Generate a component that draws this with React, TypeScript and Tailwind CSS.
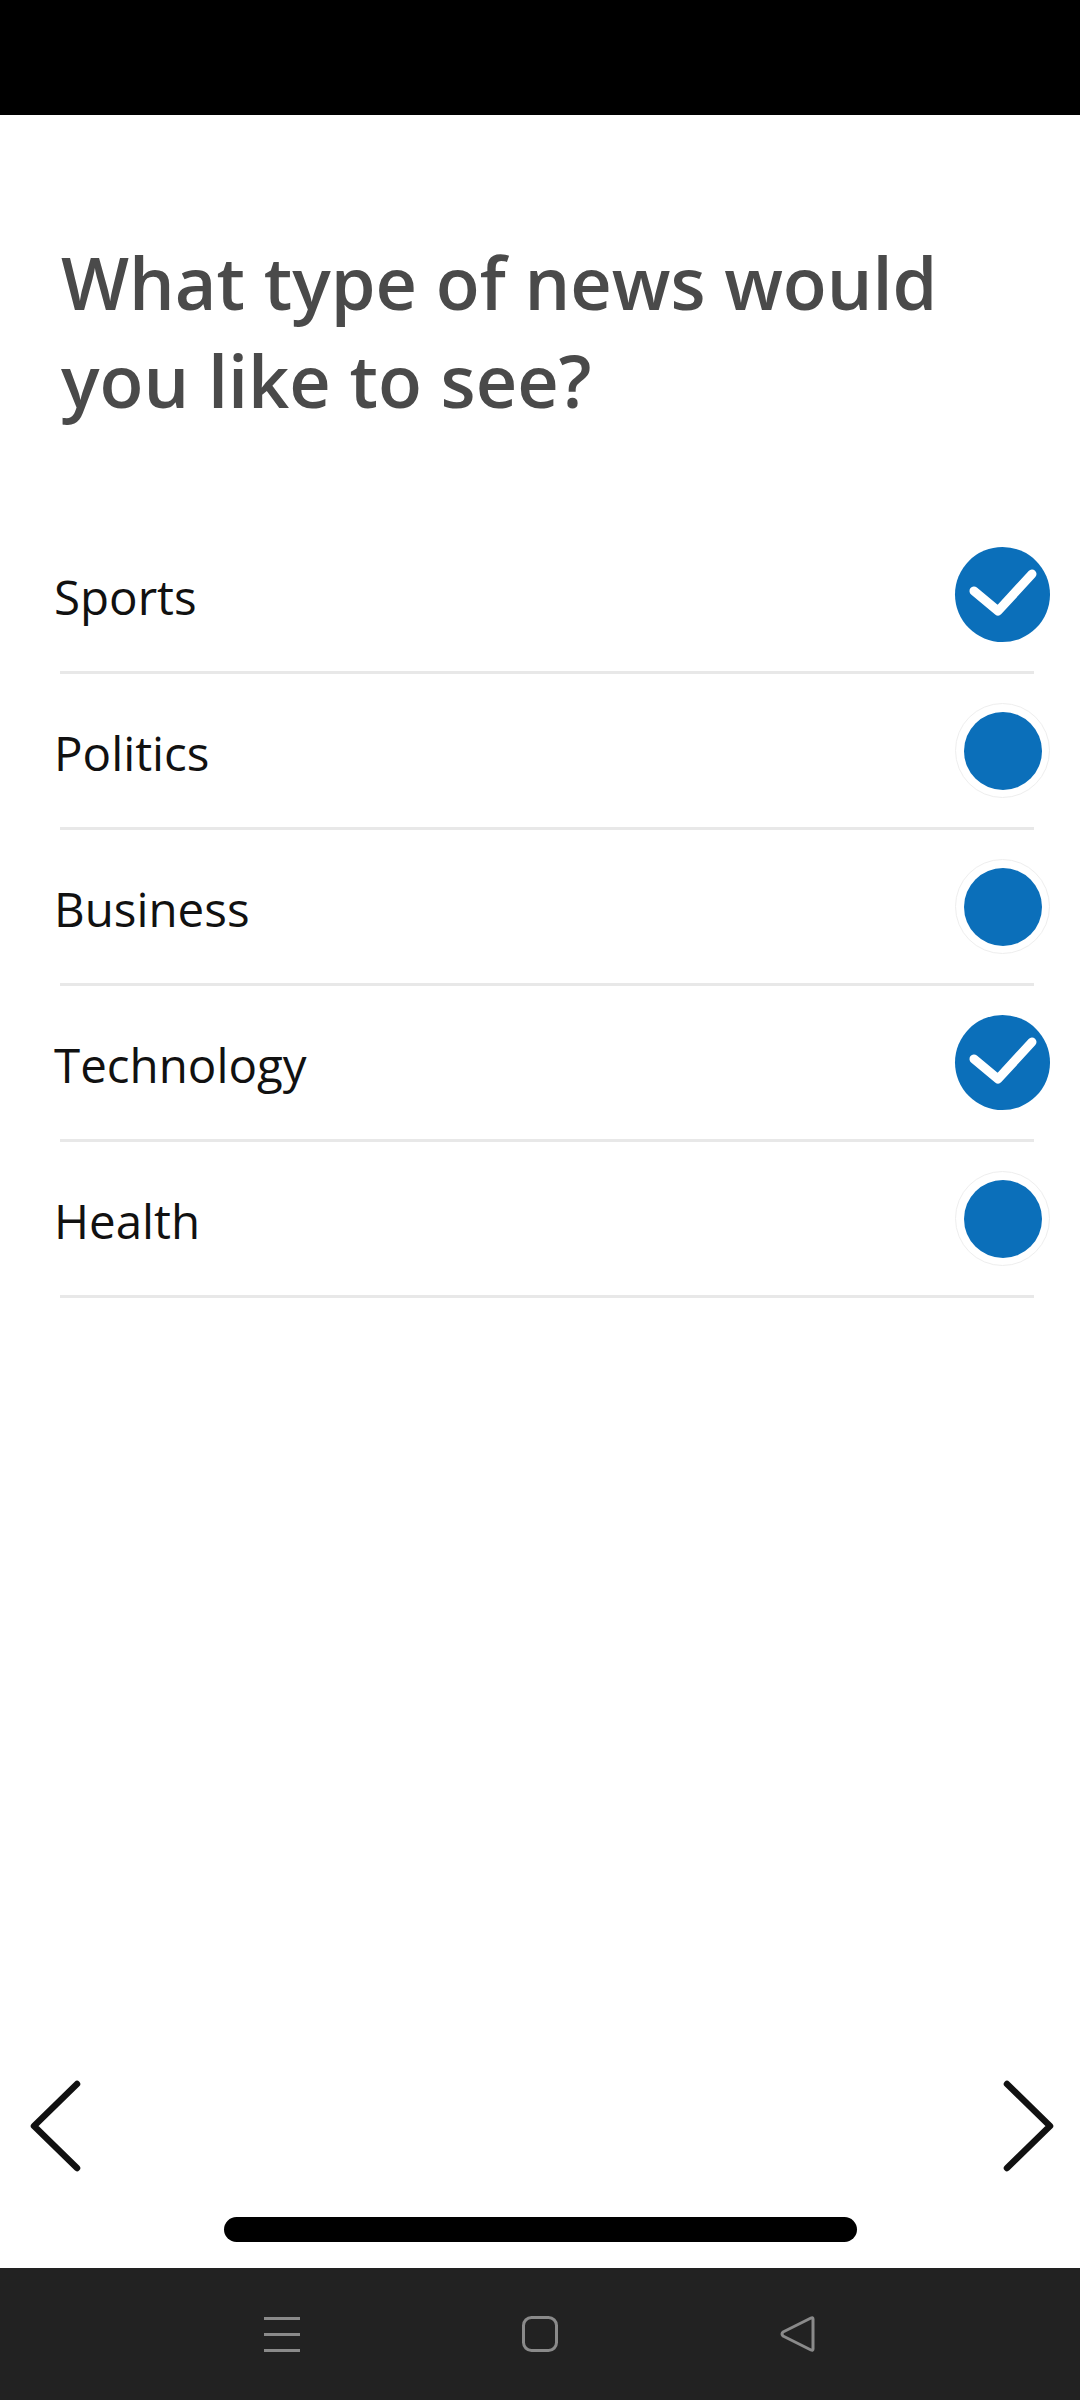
import React from "react";

const items = [
  { label: "Sports", checked: true },
  { label: "Politics", checked: false },
  { label: "Business", checked: false },
  { label: "Technology", checked: true },
  { label: "Health", checked: false },
];

function CheckCircle({ checked }: { checked: boolean }) {
  if (checked) {
    return (
      <div className="w-[95px] h-[95px] rounded-full bg-[#0b6fba] flex items-center justify-center">
        <svg width="95" height="95" viewBox="0 0 95 95">
          <polyline
            points="19,44 43,64 77,27"
            fill="none"
            stroke="#ffffff"
            strokeWidth="9"
            strokeLinecap="round"
            strokeLinejoin="round"
          />
        </svg>
      </div>
    );
  }
  return (
    <div className="w-[95px] h-[95px] rounded-full border border-[#eeeeee] flex items-center justify-center">
      <div className="w-[78px] h-[78px] rounded-full bg-[#0b6fba]" />
    </div>
  );
}

export default function App() {
  return (
    <div
      className="w-[1080px] h-[2400px] bg-white flex flex-col overflow-hidden"
      style={{ fontFamily: '"Open Sans", "Noto Sans", sans-serif' }}
    >
      <div className="h-[115px] bg-black shrink-0" />

      <h1 className="mt-[118px] pl-[61px] text-[72px] leading-[98px] font-semibold text-[#4a4a4a]">
        What type of news would
        <br />
        you like to see?
      </h1>

      <div className="mt-[89px] flex flex-col">
        {items.map((it) => (
          <div key={it.label} className="flex flex-col">
            <div className="h-[153px] flex items-center justify-between pl-[54px] pr-[30px]">
              <span className="text-[47.5px] leading-[64px] mt-[4px] text-[#111111]">{it.label}</span>
              <CheckCircle checked={it.checked} />
            </div>
            <div className="ml-[60px] w-[974px] h-[3px] bg-[#e8e8e8]" />
          </div>
        ))}
      </div>

      <div className="flex-1" />

      <div className="h-[92px] flex items-center justify-between pl-[28px] pr-[22px] mb-[45px]">
        <svg width="56" height="92" viewBox="0 0 56 92">
          <polyline
            points="49,4 6,46 49,88"
            fill="none"
            stroke="#111111"
            strokeWidth="6.5"
            strokeLinecap="round"
            strokeLinejoin="round"
          />
        </svg>
        <svg width="56" height="92" viewBox="0 0 56 92">
          <polyline
            points="5,4 48,46 5,88"
            fill="none"
            stroke="#111111"
            strokeWidth="6.5"
            strokeLinecap="round"
            strokeLinejoin="round"
          />
        </svg>
      </div>

      <div className="flex justify-center mb-[26px]">
        <div className="w-[633px] h-[25px] rounded-full bg-black" />
      </div>

      <div className="h-[132px] bg-[#222222] flex items-center justify-center gap-[222px] shrink-0">
        <svg width="36" height="36" viewBox="0 0 36 36">
          <rect x="0" y="1" width="36" height="3" fill="#8a8a8a" />
          <rect x="0" y="17" width="36" height="3" fill="#8a8a8a" />
          <rect x="0" y="33" width="36" height="3" fill="#8a8a8a" />
        </svg>
        <svg width="36" height="36" viewBox="0 0 36 36">
          <rect x="1.5" y="1.5" width="33" height="33" rx="8" fill="none" stroke="#8a8a8a" strokeWidth="3" />
        </svg>
        <svg width="36" height="36" viewBox="0 0 36 36">
          <path
            d="M33 3 L33 33 Q33 35 31 34 L3 20 Q1 18 3 16 L31 2 Q33 1 33 3 Z"
            fill="none"
            stroke="#8a8a8a"
            strokeWidth="3"
            strokeLinejoin="round"
          />
        </svg>
      </div>
    </div>
  );
}
